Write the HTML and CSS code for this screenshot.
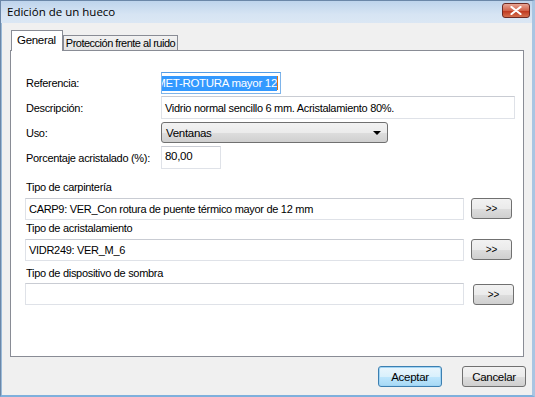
FILE: index.html
```html
<!DOCTYPE html>
<html lang="es">
  <head>
    <meta charset="utf-8" />
    <title>Edición de un hueco</title>
    <link rel="stylesheet" href="styles.css">
  </head>
  <body>
    <div class="window">
        <div class="titlebar">
            <span class="title">Edición de un hueco</span>
            <span class="close">
                <svg width="12" height="9" viewBox="0 0 12 9">
                    <path d="M1.5 1 L10.5 8 M10.5 1 L1.5 8" stroke="#fff" stroke-width="2.2" stroke-linecap="round"/>
                </svg>
            </span>
        </div>
        <div class="client">
            <!--tabs of the dialog-->
            <div class="tabs">
                <div class="tab active">General</div>
                <div class="tab">Protección frente al ruido</div>
            </div>
            <div class="panel">
                <div class="row r1">
                    <label>Referencia:</label>
                    <div class="field ref"><span class="sel">MET-ROTURA mayor 12</span><span class="caret"></span></div>
                </div>
                <div class="row r2">
                    <label>Descripción:</label>
                    <div class="field desc">Vidrio normal sencillo 6 mm. Acristalamiento 80%.</div>
                </div>
                <div class="row r3">
                    <label>Uso:</label>
                    <div class="select">Ventanas<span class="arrow"></span></div>
                </div>
                <div class="row r4">
                    <label>Porcentaje acristalado (%):</label>
                    <div class="field pct">80,00</div>
                </div>

                <div class="group g1">
                    <div class="glabel">Tipo de carpintería</div>
                    <div class="gline">
                        <div class="field wide">CARP9: VER_Con rotura de puente térmico mayor de 12 mm</div>
                        <button class="btn more">&gt;&gt;</button>
                    </div>
                </div>
                <div class="group g2">
                    <div class="glabel">Tipo de acristalamiento</div>
                    <div class="gline">
                        <div class="field wide">VIDR249: VER_M_6</div>
                        <button class="btn more">&gt;&gt;</button>
                    </div>
                </div>
                <div class="group g3">
                    <div class="glabel">Tipo de dispositivo de sombra</div>
                    <div class="gline">
                        <div class="field wide"></div>
                        <button class="btn more last">&gt;&gt;</button>
                    </div>
                </div>
            </div>
            <div class="footer">
                <button class="btn default">Aceptar</button>
                <button class="btn">Cancelar</button>
            </div>
        </div>
    </div>
  </body>
</html>
```

FILE: styles.css
```css
body{
    margin: 0;
    font-family: "Liberation Sans", Arial, sans-serif;
    font-size: 11px;
    letter-spacing: -0.3px;
    color: #000;
}

.window{
    width: 535px;
    height: 397px;
    box-sizing: border-box;
    border: 1px solid #6b87a8;
    border-right: 3px solid #a9c5e2;
    border-bottom: 2px solid #7fb0dc;
    background-color: #f0f0f0;
    display: flex;
    flex-direction: column;
}

.titlebar{
    height: 22px;
    flex: none;
    background: linear-gradient(#bed4ec, #d6e4f3 60%, #dbe7f4);
    display: flex;
    align-items: center;
    justify-content: space-between;
    padding: 0 2px 0 6px;
}

.title{
    font-family: "Open Sans", "DejaVu Sans", sans-serif;
    font-size: 11.5px;
    letter-spacing: 0;
    color: #000;
    padding-bottom: 1px;
}

.close{
    width: 26px;
    height: 13px;
    border: 1px solid #6d2a23;
    border-radius: 3px;
    background: linear-gradient(#e8a493, #d1644c 50%, #c0391f 55%, #d4704f);
    display: flex;
    align-items: center;
    justify-content: center;
    margin-top: -3px;
}

.client{
    flex: 1;
    padding: 7px 8px 0 8px;
    border-left: 1px solid #9bbbd9;
}

.tabs{
    display: flex;
    align-items: flex-end;
    height: 20px;
    padding-left: 1px;
}

.tab{
    height: 14px;
    line-height: 14px;
    padding: 0 2px;
    border: 1px solid #898c95;
    border-bottom: none;
    letter-spacing: -0.5px;
    background: linear-gradient(#f2f2f2, #e3e3e3);
}

.tab.active{
    height: 20px;
    line-height: 19px;
    margin-bottom: -1px;
    padding: 0 6px 0 5px;
    background: #fff;
    position: relative;
    z-index: 1;
    font-size: 11.5px;
    letter-spacing: -0.3px;
}

.panel{
    height: 307px;
    box-sizing: border-box;
    border: 1px solid #898c95;
    background: #fff;
    padding: 21px 0 0 15px;
}

.row{
    display: flex;
    align-items: center;
}

.row label{
    width: 135px;
    flex: none;
}

.r1{ height: 22px; }
.r2{ height: 23px; margin-top: 2px; }
.r3{ height: 21px; margin-top: 3px; }
.r4{ height: 23px; margin-top: 3px; }

.field{
    box-sizing: border-box;
    height: 100%;
    border: 1px solid #dfe2e8;
    border-top-color: #c9ccd3;
    padding-left: 3px;
    display: flex;
    align-items: center;
    white-space: nowrap;
    overflow: hidden;
}

.ref{
    width: 120px;
    border-color: #7eb4ea;
    border-top-color: #569de5;
    padding: 0 2px 0 0;
    justify-content: flex-end;
}

.sel{
    background: #3399ff;
    color: #fff;
    line-height: 15px;
    font-size: 11.5px;
}

.caret{
    flex: none;
    width: 1px;
    height: 14px;
    background: #e07010;
}

.desc{ width: 354px; }
.pct{ width: 60px; align-items: flex-start; padding-top: 3px; font-size: 11.5px; }

.select{
    box-sizing: border-box;
    width: 227px;
    height: 100%;
    border: 1px solid #707070;
    border-radius: 3px;
    background: linear-gradient(#f2f2f2, #ebebeb 50%, #dddddd 51%, #cfcfcf);
    padding-left: 4px;
    display: flex;
    align-items: center;
    justify-content: space-between;
    font-size: 11.5px;
}

.arrow{
    width: 0;
    height: 0;
    border-left: 4px solid transparent;
    border-right: 4px solid transparent;
    border-top: 4px solid #000;
    margin-right: 6px;
}

.glabel{
    line-height: 16px;
}

.g1{ margin-top: 10px; }
.g2{ margin-top: 0; }
.g3{ margin-top: 4px; }

.gline{
    display: flex;
    align-items: flex-start;
    height: 22px;
    margin-top: 3px;
    margin-left: -1px;
}

.g3 .gline{ margin-top: 2px; }

.wide{ width: 439px; }

.btn{
    font-family: "Liberation Sans", Arial, sans-serif;
    font-size: 11.5px;
    letter-spacing: -0.3px;
    color: #000;
    box-sizing: border-box;
    height: 21px;
    padding: 0;
    border: 1px solid #707070;
    border-radius: 3px;
    background: linear-gradient(#f2f2f2, #ebebeb 50%, #dddddd 51%, #cfcfcf);
}

.more{
    width: 41px;
    margin-left: 7px;
    font-size: 10px;
    letter-spacing: 0;
}

.more.last{
    margin-left: 9px;
    margin-top: 1px;
}

.footer{
    display: flex;
    justify-content: flex-end;
    gap: 20px;
    margin-top: 9px;
    margin-right: -2px;
}

.footer .btn{
    width: 64px;
}

.footer .default{
    border-color: #3c7fb1;
    background: linear-gradient(#eaf6fd, #d9f0fc 50%, #bee6fd 51%, #a7d9f5);
    box-shadow: inset 0 0 0 1px #a0d4f4;
}
```
